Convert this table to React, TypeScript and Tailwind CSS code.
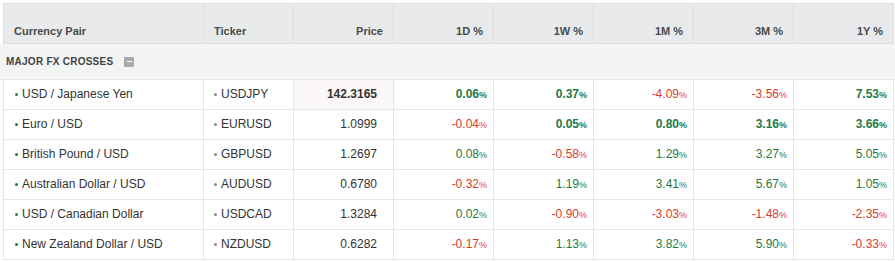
import React from 'react'

type Row = {
  pair: string
  ticker: string
  price: string
  changes: number[]
}

const rows: Row[] = [
  { pair: 'USD / Japanese Yen', ticker: 'USDJPY', price: '142.3165', changes: [0.06, 0.37, -4.09, -3.56, 7.53] },
  { pair: 'Euro / USD', ticker: 'EURUSD', price: '1.0999', changes: [-0.04, 0.05, 0.8, 3.16, 3.66] },
  { pair: 'British Pound / USD', ticker: 'GBPUSD', price: '1.2697', changes: [0.08, -0.58, 1.29, 3.27, 5.05] },
  { pair: 'Australian Dollar / USD', ticker: 'AUDUSD', price: '0.6780', changes: [-0.32, 1.19, 3.41, 5.67, 1.05] },
  { pair: 'USD / Canadian Dollar', ticker: 'USDCAD', price: '1.3284', changes: [0.02, -0.9, -3.03, -1.48, -2.35] },
  { pair: 'New Zealand Dollar / USD', ticker: 'NZDUSD', price: '0.6282', changes: [-0.17, 1.13, 3.82, 5.9, -0.33] },
]

const periods = ['1D %', '1W %', '1M %', '3M %', '1Y %']

const cols = 'grid grid-cols-[200px_90px_100px_100px_100px_100px_100px_100px]'

const Change: React.FC<{ value: number; strong: boolean }> = ({ value, strong }) => {
  const up = value >= 0
  return (
    <div className="flex items-center justify-end pr-[6px] border-r border-[#e6e6e6]">
      <span className={`-mt-[2px] ${up ? `text-[#1f7a45] ${strong ? 'font-bold' : ''}` : 'text-[#d63c30]'}`}>
        {value.toFixed(2)}
        <span className="text-[9px]">%</span>
      </span>
    </div>
  )
}

export default function App() {
  return (
    <div className="pt-[3px] pl-[3px] w-[895px] h-[261px] bg-white text-[12px] text-[#333] font-['Liberation_Sans',Arial,sans-serif]">
      {/* Column headers */}
      <div className={`${cols} w-[891px] h-[41px] border-t border-l border-b border-[#dcdfe0] bg-[#e8eaeb] text-[11px] font-bold text-[#4a4a4a]`}>
        <div className="flex items-end pl-[10px] pb-[4px] border-r border-[#dcdfe0]">Currency Pair</div>
        <div className="flex items-end pl-[10px] pb-[4px] border-r border-[#dcdfe0]">Ticker</div>
        <div className="flex items-end justify-end pr-[10px] pb-[4px] border-r border-[#dcdfe0]">Price</div>
        {periods.map((p) => (
          <div key={p} className="flex items-end justify-end pr-[10px] pb-[4px] border-r border-[#dcdfe0]">
            {p}
          </div>
        ))}
      </div>

      {/* Group row */}
      <div className="-ml-[3px] w-[895px] h-[36px] flex items-center gap-[11px] pl-[6px] bg-[#f3f4f4] border-b border-[#e6e6e6]">
        <span className="text-[10px] font-bold text-[#444] tracking-[0.025em]">MAJOR FX CROSSES</span>
        <span className="w-[10px] h-[10px] rounded-[1px] bg-[#a9a9a9] flex items-center justify-center">
          <span className="w-[5px] h-[1px] bg-white" />
        </span>
      </div>

      {/* Data rows */}
      {rows.map((r, i) => (
        <div key={r.ticker} className={`${cols} w-[891px] h-[30px] border-l border-b border-[#e6e6e6]`}>
          <div className="flex items-center pl-[11px] gap-[4px] border-r border-[#e6e6e6]">
            <span className="shrink-0 w-[3px] h-[3px] rounded-full bg-[#1f7a45]" />
            <span className="-mt-[2px]">{r.pair}</span>
          </div>
          <div className="flex items-center pl-[10px] gap-[4px] border-r border-[#e6e6e6]">
            <span className="shrink-0 w-[3px] h-[3px] rounded-full bg-[#8a8a8a]" />
            <span className="-mt-[2px]">{r.ticker}</span>
          </div>
          <div
            className={`flex items-center justify-end pr-[16px] border-r border-[#e6e6e6] ${
              i === 0 ? 'bg-[#fcf7f7] font-bold' : ''
            }`}
          >
            <span className="-mt-[2px]">{r.price}</span>
          </div>
          {r.changes.map((c, j) => (
            <Change key={j} value={c} strong={i < 2} />
          ))}
        </div>
      ))}
    </div>
  )
}
